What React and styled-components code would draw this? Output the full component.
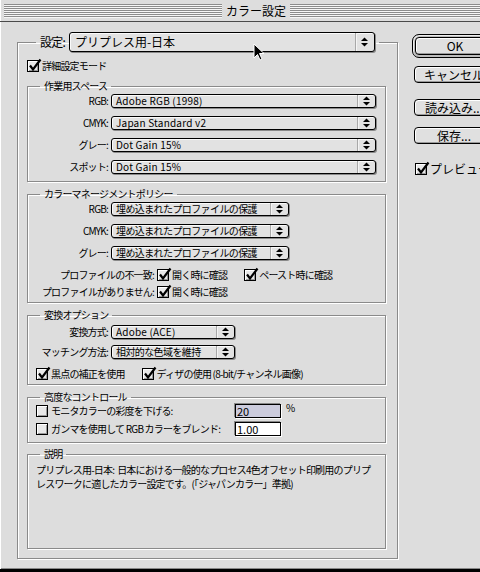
import React from 'react'
import styled, { createGlobalStyle } from 'styled-components'

const GlobalStyle = createGlobalStyle`
	html, body {
		margin: 0;
		padding: 0;
		background: #dddddd;
		overflow: hidden;
	}
	body {
		font-family: "Noto Sans CJK JP", sans-serif;
		color: #000;
	}
`

const Window = styled.div`
	position: relative;
	width: 512px;
	height: 572px;
	box-sizing: border-box;
	background: #dddddd;
	border-bottom: 3px solid #000;
	box-shadow: inset 1px 0 0 #fff, inset 0 -1px 0 #888;
	display: flex;
	flex-direction: column;
	font-family: "Noto Sans CJK JP", sans-serif;
`

const TitleBar = styled.div`
	height: 21px;
	border-bottom: 1px solid #4a4a4a;
	display: flex;
	align-items: center;
	padding: 0 4px;
	gap: 4px;
`

const Stripes = styled.div`
	flex: 1;
	height: 14px;
	background: repeating-linear-gradient(to bottom, #8c8c8c 0 1px, #f6f6f6 1px 2px);
`

const Title = styled.div`
	font-size: 12px;
	line-height: 14px;
`

const Content = styled.div`
	flex: 1;
	display: flex;
	align-items: flex-start;
	padding: 10px 0 0 17px;
	gap: 14px;
`

const Group = styled.fieldset`
	margin: ${p => p.$mt || 0}px 0 0 0;
	padding: ${p => p.$pad};
	border: 1px solid #8a8a8a;
	box-shadow: inset 1px 1px 0 #fff, 1px 1px 0 #fff;
	min-width: 0;
	width: ${p => (p.$w ? p.$w + 'px' : 'auto')};
	box-sizing: border-box;
	display: flex;
	flex-direction: column;
`

const Legend = styled.legend`
	margin-left: ${p => p.$left}px;
	padding: 0 4px;
	font-size: 10px;
	letter-spacing: -0.8px;
	line-height: 12px;
	display: flex;
	align-items: center;
	gap: 4px;
`

const BigLabel = styled.span`
	font-size: 12px;
	line-height: 14px;
	white-space: nowrap;
`

const SmallText = styled.span`
	font-size: 10px;
	letter-spacing: -0.8px;
	line-height: 12px;
	white-space: nowrap;
`

const Rows = styled.div`
	display: grid;
	grid-template-columns: ${p => p.$label}px ${p => (p.$w ? p.$w + 'px' : '1fr')};
	column-gap: 3px;
	row-gap: ${p => p.$gap}px;
	align-items: center;
	justify-items: ${p => (p.$w ? 'start' : 'stretch')};
`

const RowLabel = styled.span`
	justify-self: end;
	font-size: 10px;
	letter-spacing: -0.8px;
	line-height: 12px;
	white-space: nowrap;
`

const PopupBox = styled.div`
	display: flex;
	height: ${p => (p.$big ? 20 : 14)}px;
	width: ${p => (p.$w ? p.$w + 'px' : '100%')};
	box-sizing: border-box;
	border: 1px solid #000;
	border-radius: 3px;
	background: #e2e2e2;
	box-shadow: 1px 1px 0 #8a8a8a, inset 1px 1px 0 #fafafa;
`

const PopupText = styled.span`
	flex: 1;
	padding-left: ${p => (p.$big ? 5 : 4)}px;
	font-size: ${p => (p.$big ? 12 : 10)}px;
	letter-spacing: ${p => (p.$big ? 0 : p.$latin ? 0.2 : -0.6)}px;
	line-height: ${p => (p.$big ? 18 : 12)}px;
	white-space: nowrap;
`

const PopupArrow = styled.span`
	width: ${p => (p.$big ? 18 : 17)}px;
	border-left: 1px solid #a8a8a8;
	box-shadow: inset 1px 0 0 #f4f4f4;
	display: flex;
	align-items: center;
	justify-content: center;
`

const Popup = ({ text, w, big, latin }) => (
	<PopupBox $w={w} $big={big}>
		<PopupText $big={big} $latin={latin}>{text}</PopupText>
		<PopupArrow $big={big}>
			<svg width="7" height="10" viewBox="0 0 7 10">
				<polygon points="0,4 3.5,0.5 7,4" fill="#000" />
				<polygon points="0,6 3.5,9.5 7,6" fill="#000" />
			</svg>
		</PopupArrow>
	</PopupBox>
)

const CheckRow = styled.div`
	display: flex;
	align-items: center;
	gap: ${p => p.$gap || 3}px;
	margin-left: ${p => p.$left || 0}px;
	margin-top: ${p => p.$top || 0}px;
`

const Box = styled.span`
	position: relative;
	flex: none;
	width: 12px;
	height: 12px;
	box-sizing: border-box;
	border: 1px solid #000;
	background: #e8e8e8;
	box-shadow: inset 1px 1px 0 #fff, inset -1px -1px 0 #9a9a9a;
`

const CheckMark = styled.svg`
	position: absolute;
	left: 0px;
	top: -3px;
`

const Checkbox = ({ checked }) => (
	<Box>
		{checked && (
			<CheckMark width="14" height="14" viewBox="0 0 14 14">
				<polyline points="2,7.5 5,11.5 12.5,1.5" fill="none" stroke="#000" strokeWidth="2.2" strokeLinejoin="miter" />
			</CheckMark>
		)}
	</Box>
)

const Check = ({ checked, label }) => (
	<CheckRow>
		<Checkbox checked={checked} />
		<SmallText>{label}</SmallText>
	</CheckRow>
)

const PolicyRows = styled.div`
	display: grid;
	grid-template-columns: 126px auto auto;
	column-gap: 3px;
	row-gap: 5px;
	align-items: center;
	justify-content: start;
	margin-top: 9px;
`

const InlineChecks = styled.div`
	display: flex;
	gap: 17px;
`

const ConvChecks = styled.div`
	display: flex;
	gap: 17px;
	margin: 9px 0 0 8px;
`

const AdvRow = styled.div`
	display: flex;
	align-items: center;
	margin-left: 8px;
`

const AdvLabel = styled.div`
	width: 199px;
`

const Field = styled.div`
	width: 46px;
	height: 14px;
	box-sizing: border-box;
	border: 1px solid #000;
	box-shadow: -1px -1px 0 #888, 1px 1px 0 #fff;
	background: ${p => (p.$sel ? '#ccccdd' : '#ffffff')};
	font-size: 11px;
	line-height: 12px;
	padding-left: 1px;
	font-family: "Noto Sans CJK JP", sans-serif;
`

const Percent = styled.span`
	font-size: 10px;
	line-height: 10px;
	margin: -6px 0 0 5px;
`

const AdvRows = styled.div`
	display: flex;
	flex-direction: column;
	gap: 4px;
`

const Description = styled.div`
	height: 85px;
	margin-left: 8px;
	font-size: 10px;
	letter-spacing: -0.8px;
	line-height: 13.5px;
	white-space: nowrap;
`

const Side = styled.div`
	display: flex;
	flex-direction: column;
	align-items: flex-start;
	padding-top: 2px;
	width: 90px;
`

const DefaultRing = styled.div`
	border: 1px solid #000;
	border-radius: 7px;
	padding: 2px;
	background: #bcbcbc;
	box-shadow: inset 1px 1px 0 #eee;
	width: 86px;
	box-sizing: border-box;
`

const Button = styled.div`
	height: ${p => p.$h || 17}px;
	box-sizing: border-box;
	width: ${p => p.$w || 80}px;
	margin: ${p => p.$m || '0'};
	border: 1px solid #000;
	border-radius: 4px;
	background: #e0e0e0;
	box-shadow: inset 1px 1px 0 #fff, inset -1px -1px 0 #9a9a9a;
	display: flex;
	align-items: center;
	justify-content: center;
	font-size: 12px;
	line-height: 14px;
	white-space: nowrap;
`

const Cursor = styled.svg`
	position: absolute;
	left: 253px;
	top: 43px;
`

export default function App() {
	return (
		<Window>
			<GlobalStyle />
			<TitleBar>
				<Stripes />
				<Title>カラー設定</Title>
				<Stripes />
			</TitleBar>
			<Content>
				<Group $w={381} $pad="8px 11px 9px 9px">
					<Legend $left={9}>
						<BigLabel>設定:</BigLabel>
						<Popup big w={306} text="プリプレス用-日本" />
					</Legend>
					<Check checked label="詳細設定モード" />

					<Group $mt={8} $pad="2px 9px 7px 0">
						<Legend $left={12}>作業用スペース</Legend>
						<Rows $label={80} $gap={8}>
							<RowLabel>RGB:</RowLabel>
							<Popup latin text="Adobe RGB (1998)" />
							<RowLabel>CMYK:</RowLabel>
							<Popup latin text="Japan Standard v2" />
							<RowLabel>グレー:</RowLabel>
							<Popup latin text="Dot Gain 15%" />
							<RowLabel>スポット:</RowLabel>
							<Popup latin text="Dot Gain 15%" />
						</Rows>
					</Group>

					<Group $mt={6} $pad="2px 9px 4px 0">
						<Legend $left={12}>カラーマネージメントポリシー</Legend>
						<Rows $label={80} $gap={8} $w={178}>
							<RowLabel>RGB:</RowLabel>
							<Popup w={178} text="埋め込まれたプロファイルの保護" />
							<RowLabel>CMYK:</RowLabel>
							<Popup w={178} text="埋め込まれたプロファイルの保護" />
							<RowLabel>グレー:</RowLabel>
							<Popup w={178} text="埋め込まれたプロファイルの保護" />
						</Rows>
						<PolicyRows>
							<RowLabel>プロファイルの不一致:</RowLabel>
							<InlineChecks>
								<Check checked label="開く時に確認" />
								<Check checked label="ペースト時に確認" />
							</InlineChecks>
							<span />
							<RowLabel>プロファイルがありません:</RowLabel>
							<Check checked label="開く時に確認" />
							<span />
						</PolicyRows>
					</Group>

					<Group $mt={6} $pad="4px 9px 4px 0">
						<Legend $left={12}>変換オプション</Legend>
						<Rows $label={80} $gap={6} $w={124}>
							<RowLabel>変換方式:</RowLabel>
							<Popup latin w={124} text="Adobe (ACE)" />
							<RowLabel>マッチング方法:</RowLabel>
							<Popup w={124} text="相対的な色域を維持" />
						</Rows>
						<ConvChecks>
							<Check checked label="黒点の補正を使用" />
							<Check checked label="ディザの使用 (8-bit/チャンネル画像)" />
						</ConvChecks>
					</Group>

					<Group $mt={6} $pad="1px 9px 6px 0">
						<Legend $left={12}>高度なコントロール</Legend>
						<AdvRows>
							<AdvRow>
								<AdvLabel>
									<Check label="モニタカラーの彩度を下げる:" />
								</AdvLabel>
								<Field $sel>20</Field>
								<Percent>%</Percent>
							</AdvRow>
							<AdvRow>
								<AdvLabel>
									<Check label="ガンマを使用して RGB カラーをブレンド:" />
								</AdvLabel>
								<Field>1.00</Field>
							</AdvRow>
						</AdvRows>
					</Group>

					<Group $mt={5} $pad="3px 9px 0 0">
						<Legend $left={12}>説明</Legend>
						<Description>
							プリプレス用-日本:&nbsp; 日本における一般的なプロセス4色オフセット印刷用のプリプ
							<br />
							レスワークに適したカラー設定です。(「ジャパンカラー」準拠)
						</Description>
					</Group>
				</Group>

				<Side>
					<DefaultRing>
						<Button $w={80} $h={18}>OK</Button>
					</DefaultRing>
					<Button $m="8px 0 0 2px">キャンセル</Button>
					<Button $m="16px 0 0 2px">読み込み...</Button>
					<Button $m="11px 0 0 2px">保存...</Button>
					<CheckRow $left={3} $top={18}>
						<Checkbox checked />
						<BigLabel>プレビュー</BigLabel>
					</CheckRow>
				</Side>
			</Content>
			<Cursor width="12" height="19" viewBox="0 0 12 19">
				<polygon points="1,1 1,15 4.5,11.5 7,17 9,16 6.5,10.5 11,10.5" fill="#000" stroke="#fff" strokeWidth="1" />
			</Cursor>
		</Window>
	)
}
